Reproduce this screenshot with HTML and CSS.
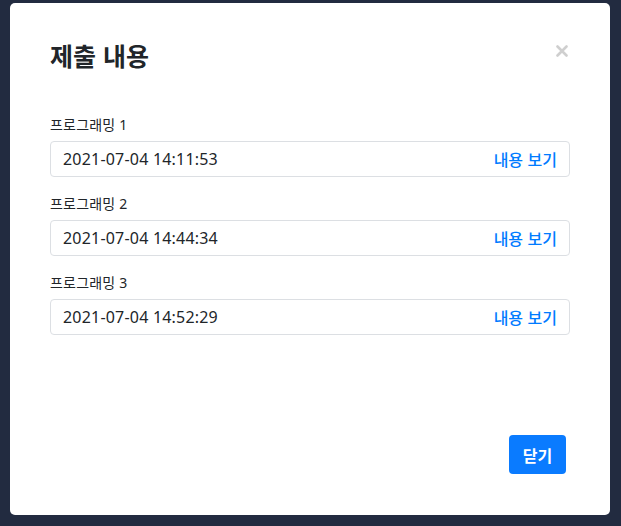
FILE: index.html
```html
<!DOCTYPE html>
<html lang="ko">
<head>
<meta charset="utf-8">
<title>제출 내용</title>
<link rel="stylesheet" href="styles.css">
</head>
<body>
<div class="modal">
  <div class="modal-header">
    <h2 class="modal-title">제출 내용</h2>
    <button class="close" aria-label="닫기">
      <svg width="12" height="12" viewBox="0 0 12 12"><path d="M1.5 1.5L10.5 10.5M10.5 1.5L1.5 10.5" stroke="#cfcfcf" stroke-width="2.6" stroke-linecap="round"/></svg>
    </button>
  </div>
  <div class="modal-body">
    <div class="group">
      <label class="label">프로그래밍 1</label>
      <div class="field"><span class="time">2021-07-04 14:11:53</span><a class="view" href="#">내용 보기</a></div>
    </div>
    <div class="group">
      <label class="label">프로그래밍 2</label>
      <div class="field"><span class="time">2021-07-04 14:44:34</span><a class="view" href="#">내용 보기</a></div>
    </div>
    <div class="group">
      <label class="label">프로그래밍 3</label>
      <div class="field"><span class="time">2021-07-04 14:52:29</span><a class="view" href="#">내용 보기</a></div>
    </div>
  </div>
  <div class="modal-footer">
    <button class="btn-close">닫기</button>
  </div>
</div>
</body>
</html>
```
FILE: styles.css
```css
html, body {
  margin: 0;
  height: 100%;
}
body {
  background: #222b40;
  padding: 3px 11px 11px 10px;
  box-sizing: border-box;
  font-family: "Noto Sans", "Noto Sans CJK KR", sans-serif;
  color: #212529;
}
.modal {
  background: #fff;
  border-radius: 5px;
  height: 512px;
  box-sizing: border-box;
  padding: 37px 40px 41px 40px;
  display: flex;
  flex-direction: column;
}
.modal-header {
  display: flex;
  justify-content: space-between;
  align-items: flex-start;
}
.modal-title {
  margin: 0;
  font-size: 25px;
  line-height: 30px;
  font-weight: 700;
  color: #212529;
  font-family: "Noto Sans CJK KR", sans-serif;
}
.close {
  border: 0;
  background: none;
  padding: 0;
  margin: 5px 2px 0 0;
  width: 12px;
  height: 12px;
  display: flex;
}
.modal-body {
  margin-top: 45px;
}
.group {
  margin-bottom: 17px;
}
.label {
  display: block;
  font-size: 14px;
  line-height: 20px;
  margin-bottom: 6px;
  color: #212529;
  letter-spacing: 0.2px;
}
.field {
  height: 36px;
  box-sizing: border-box;
  border: 1px solid #dcdfe3;
  border-radius: 4px;
  display: flex;
  align-items: center;
  justify-content: space-between;
  padding: 0 12px;
}
.time {
  font-size: 16px;
  color: #212529;
  letter-spacing: 0.2px;
}
.view {
  font-size: 16px;
  font-weight: 500;
  color: #007bff;
  text-decoration: none;
  font-family: "Noto Sans CJK KR", sans-serif;
}
.modal-footer {
  margin-top: auto;
  display: flex;
  justify-content: flex-end;
  padding-right: 4px;
}
.btn-close {
  width: 57px;
  height: 39px;
  border: 0;
  border-radius: 4px;
  background: #0a7bff;
  color: #fff;
  font-size: 16px;
  font-weight: 700;
  font-family: "Noto Sans CJK KR", sans-serif;
  padding: 0;
}
```
